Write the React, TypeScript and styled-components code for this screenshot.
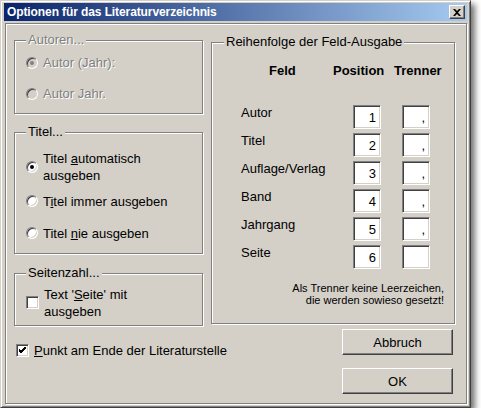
import React from "react";
import styled, { createGlobalStyle } from "styled-components";

const GlobalStyle = createGlobalStyle`
  html, body {
    margin: 0;
    padding: 0;
    background: #ffffff;
  }
  body {
    font-family: "Liberation Sans", Arial, sans-serif;
    font-size: 13px;
    color: #000;
  }
`;

const Window = styled.div`
  width: 471px;
  height: 408px;
  box-sizing: border-box;
  background: #d4d0c8;
  border: 1px solid;
  border-color: #d4d0c8 #404040 #404040 #d4d0c8;
  box-shadow: inset 1px 1px 0 #fff, inset -1px -1px 0 #808080,
    4px 4px 6px rgba(0, 0, 0, 0.55);
  padding: 2px;
  display: flex;
  flex-direction: column;
`;

const TitleBar = styled.div`
  height: 18px;
  margin: 0 1px;
  padding: 0 2px 0 3px;
  background: linear-gradient(to right, #0a246a, #a6caf0);
  display: flex;
  align-items: center;
  justify-content: space-between;
`;

const TitleText = styled.span`
  color: #fff;
  font-weight: bold;
  font-size: 12px;
  letter-spacing: -0.1px;
  line-height: 14px;
`;

const CloseButton = styled.div`
  width: 16px;
  height: 14px;
  box-sizing: border-box;
  background: #d4d0c8;
  border: 1px solid;
  border-color: #fff #404040 #404040 #fff;
  box-shadow: inset -1px -1px 0 #808080;
  display: flex;
  align-items: center;
  justify-content: center;
`;

const Panel = styled.div`
  margin: 2px 0 0 2px;
  width: 462px;
  height: 381px;
  box-sizing: border-box;
  border: 1px solid #808080;
  box-shadow: 1px 1px 0 #fff, inset 1px 1px 0 #fff;
  padding: 9px 12px 0 8px;
`;

const Columns = styled.div`
  display: grid;
  grid-template-columns: 189px 244px;
  column-gap: 8px;
  align-items: start;
`;

const LeftColumn = styled.div`
  display: flex;
  flex-direction: column;
`;

const Group = styled.fieldset<{ $h: number; $top?: number; $pt?: number; $pl?: number; $pr?: number }>`
  margin: ${(p) => p.$top ?? 0}px 0 0 0;
  height: ${(p) => p.$h}px;
  box-sizing: border-box;
  min-width: 0;
  border: 1px solid #808080;
  box-shadow: 1px 1px 0 #fff, inset 1px 1px 0 #fff;
  padding: ${(p) => p.$pt ?? 0}px ${(p) => p.$pr ?? 0}px 0 ${(p) => p.$pl ?? 11}px;
`;

const Legend = styled.legend<{ $disabled?: boolean }>`
  padding: 0 2px;
  line-height: 14px;
  background: #d4d0c8;
  color: ${(p) => (p.$disabled ? "#808080" : "#000")};
  text-shadow: ${(p) => (p.$disabled ? "1px 1px 0 #fff" : "none")};
`;

const OptionRow = styled.div<{ $h: number }>`
  height: ${(p) => p.$h}px;
  display: flex;
  align-items: center;
  gap: 5px;
`;

const OptionText = styled.span<{ $disabled?: boolean }>`
  max-width: 140px;
  line-height: 17px;
  color: ${(p) => (p.$disabled ? "#808080" : "#000")};
  text-shadow: ${(p) => (p.$disabled ? "1px 1px 0 #fff" : "none")};
`;

const Radio = styled.span<{ $checked?: boolean; $disabled?: boolean }>`
  flex: none;
  width: 12px;
  height: 12px;
  box-sizing: border-box;
  border-radius: 50%;
  border: 1px solid;
  border-color: #808080 #fff #fff #808080;
  box-shadow: inset 1px 1px 0 #404040, inset -1px -1px 0 #d4d0c8;
  background: ${(p) => (p.$disabled ? "#d4d0c8" : "#fff")};
  display: flex;
  align-items: center;
  justify-content: center;
  &::after {
    content: "";
    display: ${(p) => (p.$checked ? "block" : "none")};
    width: 4px;
    height: 4px;
    border-radius: 50%;
    background: ${(p) => (p.$disabled ? "#808080" : "#000")};
  }
`;

const CheckBox = styled.span`
  flex: none;
  width: 13px;
  height: 13px;
  box-sizing: border-box;
  border: 1px solid;
  border-color: #808080 #fff #fff #808080;
  box-shadow: inset 1px 1px 0 #404040, inset -1px -1px 0 #d4d0c8;
  background: #fff;
  display: flex;
  align-items: center;
  justify-content: center;
`;

const Header = styled.div`
  display: flex;
  margin-left: 45px;
  font-weight: bold;
  line-height: 15px;
`;

const HeaderCell = styled.span<{ $w?: number }>`
  width: ${(p) => (p.$w ? `${p.$w}px` : "auto")};
`;

const FieldGrid = styled.div`
  margin: 27px 0 0 17px;
  display: grid;
  grid-template-columns: 91px 28px 28px;
  column-gap: 21px;
  row-gap: 4px;
`;

const FieldLabel = styled.span`
  line-height: 16px;
`;

const Box = styled.input`
  width: 28px;
  height: 24px;
  box-sizing: border-box;
  margin: 0;
  border: 1px solid;
  border-color: #808080 #fff #fff #808080;
  box-shadow: inset 1px 1px 0 #404040, inset -1px -1px 0 #d4d0c8;
  background: #fff;
  padding: 0 4px 0 0;
  text-align: right;
  font-family: "Liberation Sans", Arial, sans-serif;
  font-size: 13px;
  color: #000;
  outline: none;
`;

const Note = styled.p`
  margin: 13px 0 0 0;
  text-align: right;
  font-size: 11px;
  line-height: 12px;
`;

const BottomRow = styled.div`
  margin-top: 3px;
  display: flex;
  justify-content: space-between;
  align-items: flex-start;
  padding-right: 1px;
`;

const CheckLabel = styled.div`
  margin: 14px 0 0 2px;
  display: flex;
  align-items: center;
  gap: 5px;
  line-height: 15px;
`;

const Buttons = styled.div`
  display: flex;
  flex-direction: column;
  gap: 13px;
`;

const Button = styled.div`
  width: 111px;
  height: 26px;
  box-sizing: border-box;
  border: 1px solid;
  border-color: #fff #404040 #404040 #fff;
  box-shadow: inset -1px -1px 0 #808080;
  display: flex;
  align-items: center;
  justify-content: center;
  line-height: 15px;
`;

const fields: [string, string, string][] = [
  ["Autor", "1", ","],
  ["Titel", "2", ","],
  ["Auflage/Verlag", "3", ","],
  ["Band", "4", ","],
  ["Jahrgang", "5", ","],
  ["Seite", "6", ""],
];

const Check = () => (
  <svg width="7" height="7" viewBox="0 0 7 7">
    <path d="M0 2 L2 4 L7 -1 M0 3 L2 5 L7 0 M0 4 L2 6 L7 1" stroke="#000" strokeWidth="1" fill="none" shapeRendering="crispEdges" />
  </svg>
);

export default function App() {
  return (
    <>
      <GlobalStyle />
      <Window>
        <TitleBar>
          <TitleText>Optionen für das Literaturverzeichnis</TitleText>
          <CloseButton>
            <svg width="8" height="7" viewBox="0 0 8 7">
              <path d="M0 0h2l2 2 2-2h2L5 3.5 8 7H6L4 5 2 7H0l3-3.5z" fill="#000" />
            </svg>
          </CloseButton>
        </TitleBar>
        <Panel>
          <Columns>
            <LeftColumn>
              <Group $h={81}>
                <Legend $disabled>Autoren...</Legend>
                <OptionRow $h={31}>
                  <Radio $checked $disabled />
                  <OptionText $disabled>Autor (Jahr):</OptionText>
                </OptionRow>
                <OptionRow $h={31}>
                  <Radio $disabled />
                  <OptionText $disabled>Autor Jahr.</OptionText>
                </OptionRow>
              </Group>
              <Group $h={129} $top={11} $pt={10}>
                <Legend>Titel...</Legend>
                <OptionRow $h={36}>
                  <Radio $checked />
                  <OptionText>
                    Titel <u>a</u>utomatisch ausgeben
                  </OptionText>
                </OptionRow>
                <OptionRow $h={32}>
                  <Radio />
                  <OptionText>
                    T<u>i</u>tel immer ausgeben
                  </OptionText>
                </OptionRow>
                <OptionRow $h={32}>
                  <Radio />
                  <OptionText>
                    Titel <u>n</u>ie ausgeben
                  </OptionText>
                </OptionRow>
              </Group>
              <Group $h={60} $top={12} $pt={6}>
                <Legend>Seitenzahl...</Legend>
                <OptionRow $h={33}>
                  <CheckBox />
                  <OptionText>
                    Text '<u>S</u>eite' mit ausgeben
                  </OptionText>
                </OptionRow>
              </Group>
            </LeftColumn>
            <Group $h={289} $top={2} $pt={14} $pl={12} $pr={10}>
              <Legend>Reihenfolge der Feld-Ausgabe</Legend>
              <Header>
                <HeaderCell $w={64}>Feld</HeaderCell>
                <HeaderCell $w={61}>Position</HeaderCell>
                <HeaderCell>Trenner</HeaderCell>
              </Header>
              <FieldGrid>
                {fields.map(([label, pos, sep]) => (
                  <React.Fragment key={label}>
                    <FieldLabel>{label}</FieldLabel>
                    <Box readOnly defaultValue={pos} />
                    <Box readOnly defaultValue={sep} />
                  </React.Fragment>
                ))}
              </FieldGrid>
              <Note>
                Als Trenner keine Leerzeichen,
                <br />
                die werden sowieso gesetzt!
              </Note>
            </Group>
          </Columns>
          <BottomRow>
            <CheckLabel>
              <CheckBox>
                <Check />
              </CheckBox>
              <span>
                <u>P</u>unkt am Ende der Literaturstelle
              </span>
            </CheckLabel>
            <Buttons>
              <Button>Abbruch</Button>
              <Button>OK</Button>
            </Buttons>
          </BottomRow>
        </Panel>
      </Window>
    </>
  );
}
